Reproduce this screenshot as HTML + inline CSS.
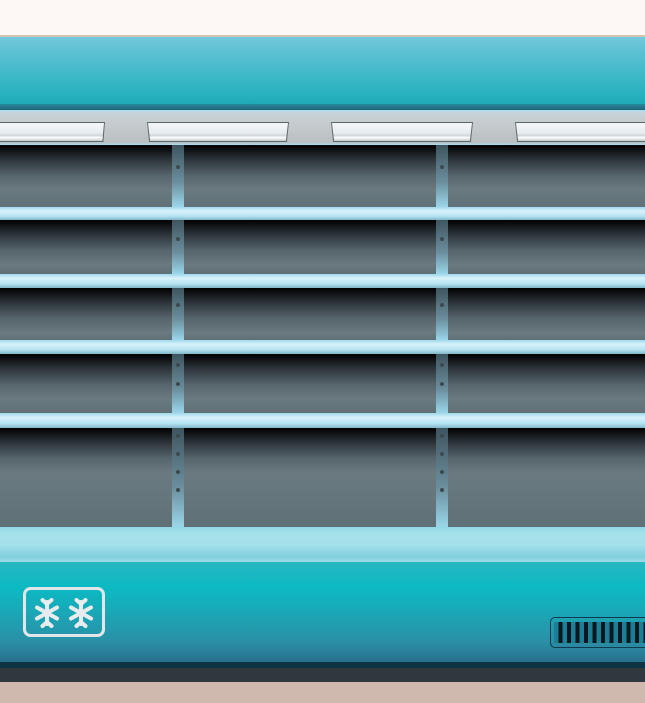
<!DOCTYPE html><html><head><style>
*{margin:0;padding:0}body{width:645px;height:703px;overflow:hidden;background:#fdf8f5;position:relative}
div{position:absolute}
.sec{left:0;width:645px;background:linear-gradient(#000 0,#2b3338 14px,#56646b 30px,#6a7a80 45px,#5f7077 100%)}
.sh{left:0;width:645px;background:linear-gradient(#9fd8ea,#d8f2fb 30%,#b6e3f2 70%,#7fb7c9)}
.post{width:12px;top:145px;height:382px;background:linear-gradient(#3e555f,#6b8f9e 60%,#9ad6ea);}
.lt{top:122px;height:20px;background:#5f666b;clip-path:polygon(0 0,100% 0,98.5% 100%,1.5% 100%)}
.lt i{position:absolute;left:1px;right:1px;top:1px;bottom:1px;background:linear-gradient(#f4f7f9,#e7edf1 55%,#cfd4d8 70%,#fff 80%,#c2c8cc);clip-path:polygon(0 0,100% 0,98.5% 100%,1.5% 100%)}
.dot{width:4px;height:4px;border-radius:2px;background:#3c4a50;left:4px}
</style></head><body>
<div style="top:35px;left:0;width:645px;height:2px;background:#d7c2b6"></div>
<div style="top:37px;left:0;width:645px;height:70px;background:linear-gradient(#72c8da,#4bbccd 40%,#29b2c0 80%,#1ea6b6)"></div>
<div style="top:104px;left:0;width:645px;height:7px;background:linear-gradient(#2a8aa0,#1d5a70)"></div>
<div style="top:110px;left:0;width:645px;height:35px;background:linear-gradient(#a9dcee 0,#c8d3d8 3px,#c4c9cc 50%,#b9bfc2 92%,#a8dcee)"></div>
<div class="lt" style="left:-4px;width:109px"><i></i></div>
<div class="lt" style="left:147px;width:142px"><i></i></div>
<div class="lt" style="left:331px;width:142px"><i></i></div>
<div class="lt" style="left:515px;width:142px"><i></i></div>
<div class="sec" style="top:145px;height:62px"></div>
<div class="sh" style="top:207px;height:13px"></div>
<div class="sec" style="top:220px;height:54px"></div>
<div class="sh" style="top:274px;height:14px"></div>
<div class="sec" style="top:288px;height:52px"></div>
<div class="sh" style="top:340px;height:14px"></div>
<div class="sec" style="top:354px;height:59px"></div>
<div class="sh" style="top:413px;height:15px"></div>
<div class="sec" style="top:428px;height:99px"></div>
<div class="post" style="left:172px;top:145px;height:62px"><div class="dot" style="top:20px"></div></div>
<div class="post" style="left:436px;top:145px;height:62px"><div class="dot" style="top:20px"></div></div>
<div class="post" style="left:172px;top:220px;height:54px"><div class="dot" style="top:17px"></div></div>
<div class="post" style="left:436px;top:220px;height:54px"><div class="dot" style="top:17px"></div></div>
<div class="post" style="left:172px;top:288px;height:52px"><div class="dot" style="top:15px"></div></div>
<div class="post" style="left:436px;top:288px;height:52px"><div class="dot" style="top:15px"></div></div>
<div class="post" style="left:172px;top:354px;height:59px"><div class="dot" style="top:9px"></div><div class="dot" style="top:28px"></div></div>
<div class="post" style="left:436px;top:354px;height:59px"><div class="dot" style="top:9px"></div><div class="dot" style="top:28px"></div></div>
<div class="post" style="left:172px;top:428px;height:99px"><div class="dot" style="top:6px"></div><div class="dot" style="top:24px"></div><div class="dot" style="top:42px"></div><div class="dot" style="top:60px"></div></div>
<div class="post" style="left:436px;top:428px;height:99px"><div class="dot" style="top:6px"></div><div class="dot" style="top:24px"></div><div class="dot" style="top:42px"></div><div class="dot" style="top:60px"></div></div>
<div style="top:527px;left:0;width:645px;height:35px;background:linear-gradient(#8fd6e4,#a7e2ec 20%,#a3e0ea 50%,#7fcfdd 85%,#9fdde8)"></div>
<div style="top:562px;left:0;width:645px;height:100px;background:linear-gradient(#28b6c0,#0bbac4 25%,#1aa8b6 50%,#2a8fa6 80%,#28708e)"></div>
<div style="top:662px;left:0;width:645px;height:6px;background:#0d3345"></div>
<div style="top:668px;left:0;width:645px;height:14px;background:#2f383d"></div>
<div style="top:682px;left:0;width:645px;height:21px;background:#cfb9ae"></div>
<svg style="position:absolute;left:23px;top:587px" width="82" height="50" viewBox="0 0 82 50">
<rect x="1.5" y="1.5" width="79" height="47" rx="6" fill="none" stroke="#e2e6e8" stroke-width="3"/>
<g stroke="#e8ecee" stroke-width="4" stroke-linecap="round" fill="none">
<g transform="translate(24,26)"><path d="M0-11V11M-10-5.5L10 5.5M-10 5.5L10-5.5M-4.5-13L0-9L4.5-13M-4.5 13L0 9L4.5 13"/></g>
<g transform="translate(58,26)"><path d="M0-11V11M-10-5.5L10 5.5M-10 5.5L10-5.5M-4.5-13L0-9L4.5-13M-4.5 13L0 9L4.5 13"/></g>
</g></svg>
<div style="left:550px;top:617px;width:110px;height:31px;border:1px solid #0d3a4c;border-radius:5px;background-color:#1d7f95;box-sizing:border-box;background-image:repeating-linear-gradient(90deg,transparent 0 4.5px,#061820 4.5px 8.5px);background-clip:content-box;background-origin:content-box;padding:4px 3px"></div>
</body></html>
